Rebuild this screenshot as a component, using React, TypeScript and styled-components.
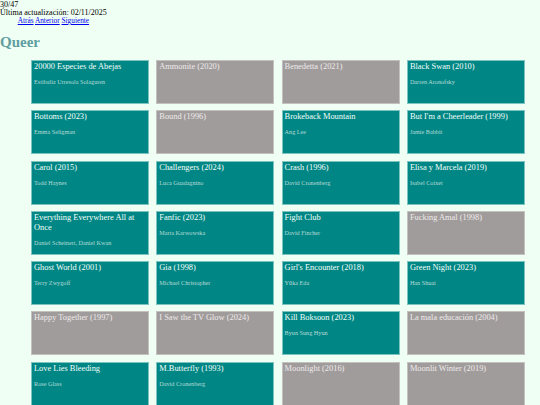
import { createGlobalStyle, styled } from "styled-components";

type Movie = { title: string; director?: string };

const movies: Movie[] = [
  { title: "20000 Especies de Abejas", director: "Estibaliz Urresola Solaguren" },
  { title: "Ammonite (2020)" },
  { title: "Benedetta (2021)" },
  { title: "Black Swan (2010)", director: "Darren Aronofsky" },
  { title: "Bottoms (2023)", director: "Emma Seligman" },
  { title: "Bound (1996)" },
  { title: "Brokeback Mountain", director: "Ang Lee" },
  { title: "But I'm a Cheerleader (1999)", director: "Jamie Babbit" },
  { title: "Carol (2015)", director: "Todd Haynes" },
  { title: "Challengers (2024)", director: "Luca Guadagnino" },
  { title: "Crash (1996)", director: "David Cronenberg" },
  { title: "Elisa y Marcela (2019)", director: "Isabel Coixet" },
  { title: "Everything Everywhere All at Once", director: "Daniel Scheinert, Daniel Kwan" },
  { title: "Fanfic (2023)", director: "Marta Karwowska" },
  { title: "Fight Club", director: "David Fincher" },
  { title: "Fucking Amal (1998)" },
  { title: "Ghost World (2001)", director: "Terry Zwygoff" },
  { title: "Gia (1998)", director: "Michael Christopher" },
  { title: "Girl's Encounter (2018)", director: "Yūka Eda" },
  { title: "Green Night (2023)", director: "Han Shuai" },
  { title: "Happy Together (1997)" },
  { title: "I Saw the TV Glow (2024)" },
  { title: "Kill Boksoon (2023)", director: "Byun Sung Hyun" },
  { title: "La mala educación (2004)" },
  { title: "Love Lies Bleeding", director: "Rose Glass" },
  { title: "M.Butterfly (1993)", director: "David Cronenberg" },
  { title: "Moonlight (2016)" },
  { title: "Moonlit Winter (2019)" },
];

const GlobalStyle = createGlobalStyle`
  body {
    margin: 0;
    background: #f0fff4;
    font-family: "Liberation Serif", "Times New Roman", serif;
    color: #000;
  }
`;

const Header = styled.div`
  display: inline-block;
  font-size: 8px;
  line-height: 8px;
  padding-top: 1px;
`;

const Line = styled.div``;

const Links = styled.div`
  text-align: center;
  font-size: 7.3px;
  a {
    color: #0000ee;
    text-decoration: underline;
  }
`;

const Heading = styled.h1`
  margin: 7px 0 9px;
  font-size: 15px;
  line-height: 17px;
  font-weight: bold;
  color: #5f9ea0;
`;

const Grid = styled.div`
  display: grid;
  grid-template-columns: repeat(4, 118px);
  column-gap: 7.3px;
  row-gap: 6.3px;
  padding-left: 31px;
`;

const Card = styled.div<{ $seen: boolean }>`
  height: 44px;
  box-sizing: border-box;
  border: 1px solid ${(p) => (p.$seen ? "#7cc4c0" : "#c4c0c0")};
  background: ${(p) => (p.$seen ? "#008684" : "#a19c9c")};
  padding: 1px 2px;
  overflow: hidden;
`;

const Title = styled.div<{ $seen: boolean }>`
  font-size: 8.4px;
  line-height: 10px;
  color: ${(p) => (p.$seen ? "#f4fffa" : "#eeeaea")};
`;

const Director = styled.div`
  margin-top: 6px;
  font-size: 6.2px;
  line-height: 7px;
  color: #b7dcd8;
`;

export default function App() {
  return (
    <>
      <GlobalStyle />
      <Header>
        <Line>30/47</Line>
        <Line>Última actualización: 02/11/2025</Line>
        <Links>
          <a href="#">Atrás</a> <a href="#">Anterior</a> <a href="#">Siguiente</a>
        </Links>
      </Header>
      <Heading>Queer</Heading>
      <Grid>
        {movies.map((m) => (
          <Card key={m.title} $seen={!!m.director}>
            <Title $seen={!!m.director}>{m.title}</Title>
            {m.director && <Director>{m.director}</Director>}
          </Card>
        ))}
      </Grid>
    </>
  );
}
